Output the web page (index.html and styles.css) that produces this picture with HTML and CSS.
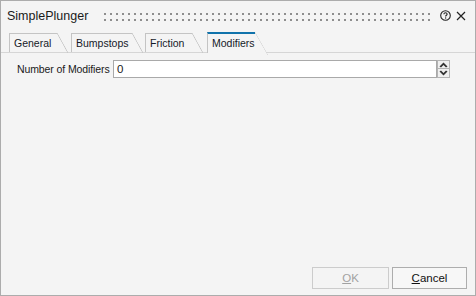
FILE: index.html
```html
<!DOCTYPE html>
<html>
<head>
<meta charset="utf-8">
<link rel="stylesheet" href="styles.css">
</head>
<body>
<div class="window">
  <div class="titlebar">
    <span class="title">SimplePlunger</span>
    <span class="grip"></span>
    <svg class="help" width="11" height="11" viewBox="0 0 11 11">
      <circle cx="5.5" cy="5.5" r="4.8" fill="none" stroke="#222" stroke-width="1.1"/>
      <path d="M3.9 4.3 C3.9 3.3 4.6 2.8 5.5 2.8 C6.4 2.8 7.1 3.3 7.1 4.2 C7.1 5.2 5.6 5.3 5.6 6.5" fill="none" stroke="#222" stroke-width="1.1"/>
      <rect x="5" y="7.4" width="1.2" height="1.2" fill="#222"/>
    </svg>
    <svg class="close" width="10" height="10" viewBox="0 0 10 10">
      <path d="M1 1 L9 9 M9 1 L1 9" stroke="#222" stroke-width="1.2"/>
    </svg>
  </div>
  <div class="tabs">
    <div class="tab tab-general">General</div>
    <div class="tab tab-bump">Bumpstops</div>
    <div class="tab tab-friction">Friction</div>
    <div class="tab tab-mod active">Modifiers</div>
  </div>
  <div class="panel">
    <div class="field">
      <label class="label">Number of Modifiers</label>
      <div class="input">0</div>
      <div class="spin">
        <div class="spin-btn">
          <svg width="9" height="6" viewBox="0 0 9 6"><path d="M4.5 0.5 L8.5 4.5 L7 5.5 L4.5 3 L2 5.5 L0.5 4.5 Z" fill="#333"/></svg>
        </div>
        <div class="spin-btn">
          <svg width="9" height="6" viewBox="0 0 9 6"><path d="M4.5 5.5 L8.5 1.5 L7 0.5 L4.5 3 L2 0.5 L0.5 1.5 Z" fill="#333"/></svg>
        </div>
      </div>
    </div>
  </div>
  <div class="footer">
    <button class="btn disabled"><u>O</u>K</button>
    <button class="btn"><u>C</u>ancel</button>
  </div>
</div>
</body>
</html>
```
FILE: styles.css
```css
html, body {
  margin: 0;
  padding: 0;
  background: #f4f4f4;
}
.window {
  width: 476px;
  height: 296px;
  box-sizing: border-box;
  border: 1px solid #acacac;
  background: #f4f4f4;
  display: flex;
  flex-direction: column;
  font-family: "Liberation Sans", Arial, sans-serif;
  font-size: 10.5px;
  color: #1a1a1a;
}
.titlebar {
  height: 26px;
  display: flex;
  align-items: center;
  padding: 4px 0 0 6px;
  box-sizing: border-box;
}
.title {
  font-size: 12.5px;
  color: #1a1a1a;
  width: 97px;
}
.grip {
  width: 330px;
  height: 8px;
  margin-top: 1px;
  background-image: conic-gradient(from 270deg at 2px 2px, #8e8e8e 25%, transparent 0);
  background-size: 6px 6px;
}
.help {
  margin-left: 6px;
  margin-top: -1px;
}
.close {
  margin-left: 5px;
  margin-top: -1px;
}
.tabs {
  display: flex;
  align-items: flex-end;
  height: 26px;
  padding-left: 8px;
  border-bottom: 1px solid #d6d6d6;
  box-sizing: border-box;
}
.tab {
  position: relative;
  box-sizing: border-box;
  height: 19px;
  line-height: 18px;
  padding: 0 0 0 4px;
  border-left: 1px solid #c4c4c4;
  border-top: 1px solid #c4c4c4;
  color: #141a28;
  white-space: nowrap;
}
.tab-general { width: 48px; margin-right: 14px; }
.tab-bump { width: 61px; margin-right: 13px; }
.tab-friction { width: 47px; margin-right: 15px; }
.tab-mod { width: 48px; }
.tab::after {
  content: "";
  position: absolute;
  left: 100%;
  top: -1px;
  width: 11px;
  height: 20px;
  background: linear-gradient(to top right, transparent calc(50% - 0.7px), #c4c4c4 50%, transparent calc(50% + 0.7px));
}
.tab.active {
  height: 21px;
  line-height: 18px;
  margin-bottom: -1px;
  border-top: 2px solid #1173ab;
  background: #f4f4f4;
}
.tab.active::after {
  top: -2px;
  height: 23px;
  width: 13px;
  background: linear-gradient(to top right, transparent calc(50% - 0.7px), #c4c4c4 50%, transparent calc(50% + 0.7px)), linear-gradient(#f4f4f4, #f4f4f4);
  clip-path: polygon(0 0, 100% 100%, 0 100%);
}
.panel {
  flex: 1;
  padding: 7px 0 0 16px;
}
.field {
  display: flex;
  align-items: center;
}
.label {
  flex: none;
  width: 96px;
  white-space: nowrap;
  letter-spacing: -0.1px;
  color: #1a1a1a;
}
.input {
  width: 324px;
  height: 18px;
  box-sizing: border-box;
  border: 1px solid #a9a9a9;
  background: #fff;
  padding-left: 3px;
  line-height: 16px;
  font-size: 11.5px;
}
.spin {
  width: 13px;
  height: 18px;
  display: flex;
  flex-direction: column;
}
.spin-btn {
  height: 9px;
  box-sizing: border-box;
  border: 1px solid #b4b4b4;
  background: #f0f0f0;
  display: flex;
  align-items: center;
  justify-content: center;
}
.spin-btn + .spin-btn {
  border-top: none;
}
.footer {
  display: flex;
  justify-content: flex-end;
  gap: 3px;
  padding: 0 8px 6px 0;
}
.btn {
  width: 77px;
  height: 22px;
  font-family: "Liberation Sans", Arial, sans-serif;
  font-size: 11.5px;
  color: #111;
  background: #f7f7f7;
  border: 1px solid #adadad;
  padding: 0;
}
.btn + .btn {
  width: 75px;
}
.btn.disabled {
  color: #a2a2a2;
  border-color: #cccccc;
  background: #f4f4f4;
}
```
